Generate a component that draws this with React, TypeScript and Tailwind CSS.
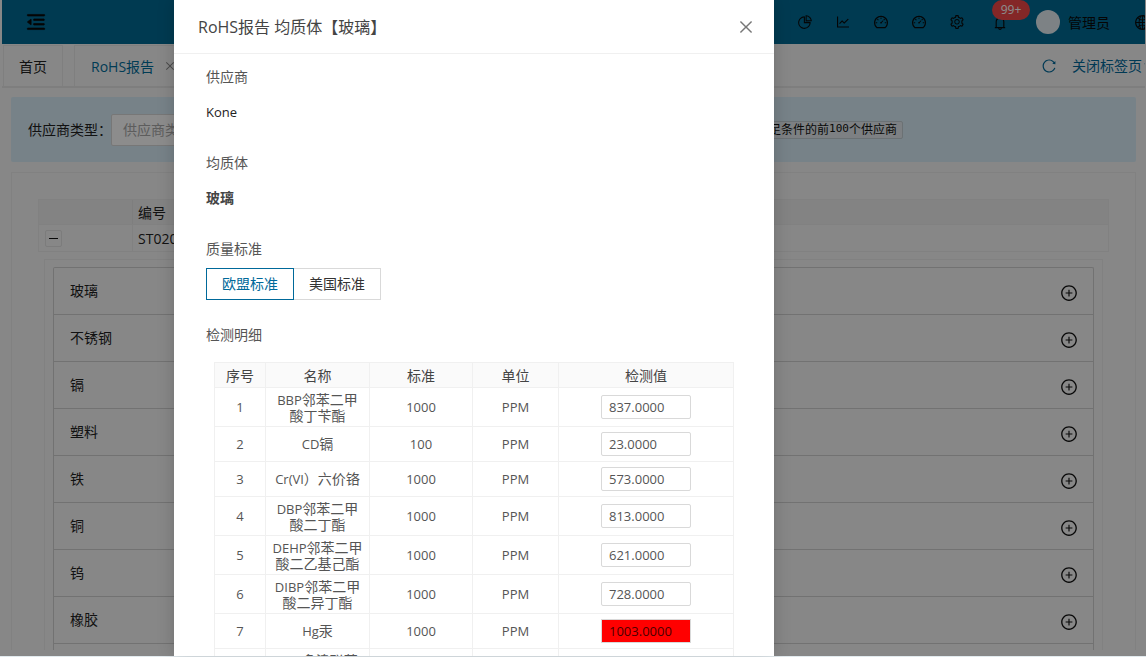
import {
  AiOutlineBell,
  AiOutlineClose,
  AiOutlineDashboard,
  AiOutlineDown,
  AiOutlineGlobal,
  AiOutlineLineChart,
  AiOutlineMenuFold,
  AiOutlinePieChart,
  AiOutlinePlusCircle,
  AiOutlineReload,
  AiOutlineSetting,
} from "react-icons/ai";

const materials = ["玻璃", "不锈钢", "镉", "塑料", "铁", "铜", "钨", "橡胶", ""];

const results = [
  { no: 1, latin: "BBP", line1: "邻苯二甲", line2: "酸丁苄酯", std: "1000", value: "837.0000" },
  { no: 2, latin: "CD", line1: "镉", std: "100", value: "23.0000" },
  { no: 3, latin: "Cr(VI", line1: "）六价铬", std: "1000", value: "573.0000" },
  { no: 4, latin: "DBP", line1: "邻苯二甲", line2: "酸二丁酯", std: "1000", value: "813.0000" },
  { no: 5, latin: "DEHP", line1: "邻苯二甲", line2: "酸二乙基己酯", std: "1000", value: "621.0000" },
  { no: 6, latin: "DIBP", line1: "邻苯二甲", line2: "酸二异丁酯", std: "1000", value: "728.0000" },
  { no: 7, latin: "Hg", line1: "汞", std: "1000", value: "1003.0000", over: true },
  { no: 8, latin: "PBB", line1: "多溴联苯", line2: "类", std: "1000", value: "0.0000" },
];

function TopIcon({ children }: { children: React.ReactNode }) {
  return <div className="w-[38px] flex justify-center text-[16px]">{children}</div>;
}

function Page() {
  return (
    <div className="h-[656px] bg-[#f6f6f6] pl-[2px] pr-[1px]">
      {/* top bar */}
      <div className="h-[44px] bg-[#006a94] flex items-center text-[#0a0a0a] overflow-hidden">
        <AiOutlineMenuFold className="ml-[23px] text-[22px]" strokeWidth={30} />
        <div className="ml-auto -mr-[6px] flex items-center">
          <TopIcon><AiOutlinePieChart /></TopIcon>
          <TopIcon><AiOutlineLineChart /></TopIcon>
          <TopIcon><AiOutlineDashboard /></TopIcon>
          <TopIcon><AiOutlineDashboard /></TopIcon>
          <TopIcon><AiOutlineSetting /></TopIcon>
          <div className="relative ml-[5px] w-[38px] flex justify-center text-[16px] pt-[1px]">
            <AiOutlineBell />
            <span className="absolute -top-[14px] left-[11px] h-[20px] w-[38px] rounded-full bg-[#f04848] text-white text-[12px] leading-[20px] text-center">99+</span>
          </div>
          <div className="ml-[17px] w-[24px] h-[24px] rounded-full bg-[#e4edf2]" />
          <span className="ml-[8px] text-[14px]">管理员</span>
          <AiOutlineGlobal className="ml-[24px] text-[17px]" />
        </div>
      </div>

      {/* tabs */}
      <div className="h-[44px] flex items-end border-b-2 border-[#e6e6e6] overflow-hidden text-[14px]">
        <div className="ml-[1px] w-[60px] h-[41px] border border-b-0 border-[#e8e8e8] flex items-center justify-center text-[#222]">首页</div>
        <div className="ml-[11px] w-[130px] h-[41px] border border-b-0 border-[#e8e8e8] flex items-center pl-[16px] text-[#006d9b]">
          RoHS报告
          <AiOutlineClose className="ml-[10px] text-[12px] text-[#888]" />
        </div>
        <div className="ml-auto -mr-[8px] h-[41px] flex items-center text-[#00699a] whitespace-nowrap">
          <AiOutlineReload className="text-[16px]" />
          <span className="ml-[15px]">关闭标签页</span>
          <AiOutlineDown className="ml-[1px] text-[10px]" />
        </div>
      </div>

      {/* content */}
      <div className="h-[562px] overflow-hidden px-[9px] pt-[9px] text-[14px] text-[#222]">
        <div className="h-[65px] w-[1125px] rounded-[2px] bg-[#d9edf7] flex items-center pl-[17px]">
          <span className="w-[83px] whitespace-nowrap">供应商类型：</span>
          <div className="w-[200px] h-[32px] rounded-[2px] border border-[#d9d9d9] bg-white pl-[11px] leading-[30px] text-[#aaa]">供应商类型</div>
          <div className="ml-[342px] w-[250px] h-[18px] rounded-[2px] border border-[#c4ced4] bg-[#e3eaee] flex items-center justify-end pr-[5px] text-[12px] text-[#111] whitespace-nowrap">
            仅显示满足条件的前<span className="font-['DejaVu_Sans_Mono',monospace] text-[11px]">100</span>个供应商
          </div>
        </div>

        <div className="mt-[10px] h-[500px] w-[1125px] border border-[#ececec] px-[26px] pt-[26px]">
          <div className="border border-[#ececec]">
            <div className="h-[25px] bg-[#efefef] border-b border-[#ececec] flex items-center">
              <div className="w-[94px] h-full border-r border-[#e6e6e6]" />
              <span className="ml-[5px]">编号</span>
            </div>
            <div className="h-[26px] flex items-center">
              <div className="w-[94px] h-full border-r border-[#ececec] flex items-center pl-[6px]">
                <div className="w-[17px] h-[17px] border border-[#e2e2e2] rounded-[2px] flex items-center justify-center">
                  <div className="w-[9px] h-[1px] bg-[#111]" />
                </div>
              </div>
              <span className="ml-[5px]">ST0201</span>
            </div>
          </div>
          <div className="mt-[7px] mx-[6px] border border-[#ececec] px-[8px] pt-[7px] h-[400px]">
            <div className="border border-[#cfcfcf] border-b-0 rounded-t-[2px]">
              {materials.map((name, i) => (
                <div key={i} className="h-[47px] border-b border-[#d0d0d0] flex items-center pl-[16px] pr-[15px] justify-between">
                  <span className="mb-[2px] text-[#222]">{name}</span>
                  {name && <AiOutlinePlusCircle className="mt-[4px] text-[18px] text-[#111]" />}
                </div>
              ))}
            </div>
          </div>
        </div>
      </div>
    </div>
  );
}

function FormLabel({ children }: { children: React.ReactNode }) {
  return <div className="h-[22px] leading-[22px] text-[#555] mb-[8px]">{children}</div>;
}

function ReportModal() {
  return (
    <div className="absolute left-[174px] top-0 w-[600px] h-[656px] overflow-hidden bg-white shadow-[0_0_16px_rgba(0,0,0,0.18)] text-[14px] text-[#555]">
      <div className="h-[54px] border-b border-[#f0f0f0] flex items-center justify-between pl-[24px] pr-[19px]">
        <div className="text-[16px] text-[#444]">RoHS报告 均质体【玻璃】</div>
        <AiOutlineClose className="text-[18px] text-[#777]" />
      </div>

      <div className="px-[32px] pt-[12px]">
        <FormLabel>供应商</FormLabel>
        <div className="h-[32px] leading-[32px] text-[13px] font-medium text-[#222] mb-[24px]">Kone</div>

        <FormLabel>均质体</FormLabel>
        <div className="h-[32px] leading-[32px] font-bold text-[#444] mb-[24px]">玻璃</div>

        <FormLabel>质量标准</FormLabel>
        <div className="flex h-[32px] mb-[24px]">
          <div className="w-[88px] border border-[#00699a] text-[#00699a] flex items-center justify-center pb-[1px]">欧盟标准</div>
          <div className="w-[87px] border border-l-0 border-[#d9d9d9] text-[#333] flex items-center justify-center pb-[1px]">美国标准</div>
        </div>

        <div className="h-[22px] leading-[22px] text-[#555] mb-[16px]">检测明细</div>

        <table className="ml-[8px] w-[519px] table-fixed border-collapse text-center">
          <colgroup>
            <col className="w-[51px]" />
            <col className="w-[104px]" />
            <col className="w-[103px]" />
            <col className="w-[86px]" />
            <col className="w-[175px]" />
          </colgroup>
          <thead>
            <tr className="h-[25px] bg-[#fafafa] text-[#444]">
              {["序号", "名称", "标准", "单位", "检测值"].map((h) => (
                <th key={h} className="border border-[#f0f0f0] font-normal p-0">{h}</th>
              ))}
            </tr>
          </thead>
          <tbody>
            {results.map((r) => (
              <tr key={r.no} className={r.line2 ? "h-[39px]" : "h-[35px]"}>
                <td className="border border-[#f0f0f0] p-0 pt-[1px] text-[13px]">{r.no}</td>
                <td className="border border-[#f0f0f0] p-0 leading-[15px]">
                  <span className="text-[13px]">{r.latin}</span>
                  {r.line1}
                  {r.line2 && <br />}
                  {r.line2}
                </td>
                <td className="border border-[#f0f0f0] p-0 pt-[1px] text-[13px]">{r.std}</td>
                <td className="border border-[#f0f0f0] p-0 pt-[1px] text-[13px]">PPM</td>
                <td className="border border-[#f0f0f0] p-0">
                  <div
                    className={
                      r.over
                        ? "mx-auto w-[90px] h-[24px] border border-[#d9d9d9] bg-[#ff0000] text-left pl-[7px] text-[13px] leading-[22px] text-[#4a0000]"
                        : "mx-auto w-[90px] h-[24px] border border-[#d9d9d9] rounded-[2px] bg-white text-left pl-[7px] text-[13px] leading-[22px] text-[#555]"
                    }
                  >
                    {r.value}
                  </div>
                </td>
              </tr>
            ))}
          </tbody>
        </table>
      </div>
    </div>
  );
}

export default function App() {
  return (
    <div className="relative h-[657px] w-full overflow-hidden bg-[#e2eaee] font-['Open_Sans','Noto_Sans_CJK_SC',sans-serif]">
      <Page />
      <div className="absolute left-0 right-0 top-0 h-[656px] bg-black/45" />
      <ReportModal />
    </div>
  );
}
